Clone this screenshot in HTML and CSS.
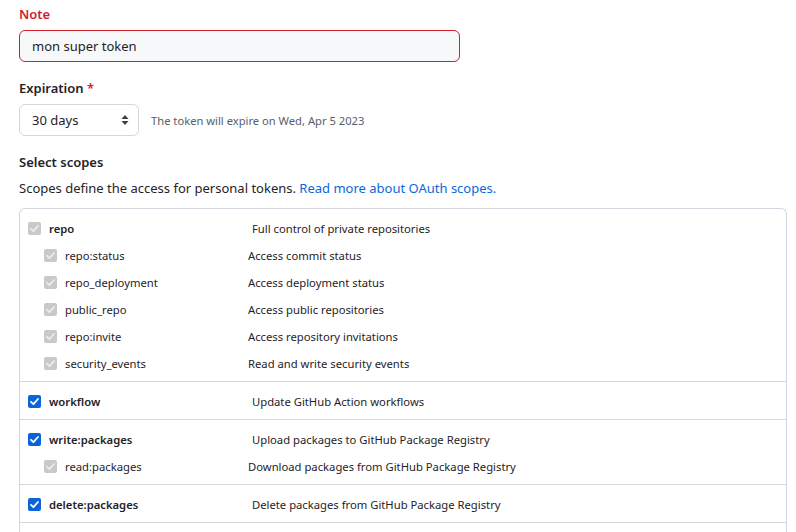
FILE: index.html
```html
<!DOCTYPE html>
<html lang="fr">
<head>
<meta charset="utf-8">
<title>New token</title>
<link rel="stylesheet" href="styles.css">
</head>
<body>
<main class="form">
  <label class="field-label field-label--error" for="note">Note</label>
  <input id="note" class="text-input text-input--error" type="text" value="mon super token">

  <div class="field-label field-label--spaced">Expiration <span class="required">*</span></div>
  <div class="expiration-row">
    <div class="select">
      <span>30 days</span>
      <svg class="select-arrows" width="8" height="12" viewBox="0 0 8 12"><path d="M4 1 L7.5 5 H0.5 Z M4 11 L0.5 7 H7.5 Z" fill="#3b4148"/></svg>
    </div>
    <span class="expire-note">The token will expire on Wed, Apr 5 2023</span>
  </div>

  <div class="field-label field-label--spaced">Select scopes</div>
  <p class="scopes-intro">Scopes define the access for personal tokens. <a href="#">Read more about OAuth scopes.</a></p>

  <div class="scopes">
    <div class="scope-group">
      <div class="scope-row scope-row--parent">
        <span class="scope-name"><span class="cb cb--disabled"><svg viewBox="0 0 13 13"><path d="M3 6.8 L5.4 9.2 L10 4" /></svg></span><strong>repo</strong></span>
        <span class="scope-desc">Full control of private repositories</span>
      </div>
      <div class="scope-row scope-row--child">
        <span class="scope-name"><span class="cb cb--disabled"><svg viewBox="0 0 13 13"><path d="M3 6.8 L5.4 9.2 L10 4" /></svg></span>repo:status</span>
        <span class="scope-desc">Access commit status</span>
      </div>
      <div class="scope-row scope-row--child">
        <span class="scope-name"><span class="cb cb--disabled"><svg viewBox="0 0 13 13"><path d="M3 6.8 L5.4 9.2 L10 4" /></svg></span>repo_deployment</span>
        <span class="scope-desc">Access deployment status</span>
      </div>
      <div class="scope-row scope-row--child">
        <span class="scope-name"><span class="cb cb--disabled"><svg viewBox="0 0 13 13"><path d="M3 6.8 L5.4 9.2 L10 4" /></svg></span>public_repo</span>
        <span class="scope-desc">Access public repositories</span>
      </div>
      <div class="scope-row scope-row--child">
        <span class="scope-name"><span class="cb cb--disabled"><svg viewBox="0 0 13 13"><path d="M3 6.8 L5.4 9.2 L10 4" /></svg></span>repo:invite</span>
        <span class="scope-desc">Access repository invitations</span>
      </div>
      <div class="scope-row scope-row--child">
        <span class="scope-name"><span class="cb cb--disabled"><svg viewBox="0 0 13 13"><path d="M3 6.8 L5.4 9.2 L10 4" /></svg></span>security_events</span>
        <span class="scope-desc">Read and write security events</span>
      </div>
    </div>

    <div class="scope-group">
      <div class="scope-row scope-row--parent">
        <span class="scope-name"><span class="cb cb--checked"><svg viewBox="0 0 13 13"><path d="M3 6.8 L5.4 9.2 L10 4" /></svg></span><strong>workflow</strong></span>
        <span class="scope-desc">Update GitHub Action workflows</span>
      </div>
    </div>

    <div class="scope-group">
      <div class="scope-row scope-row--parent">
        <span class="scope-name"><span class="cb cb--checked"><svg viewBox="0 0 13 13"><path d="M3 6.8 L5.4 9.2 L10 4" /></svg></span><strong>write:packages</strong></span>
        <span class="scope-desc">Upload packages to GitHub Package Registry</span>
      </div>
      <div class="scope-row scope-row--child">
        <span class="scope-name"><span class="cb cb--disabled"><svg viewBox="0 0 13 13"><path d="M3 6.8 L5.4 9.2 L10 4" /></svg></span>read:packages</span>
        <span class="scope-desc">Download packages from GitHub Package Registry</span>
      </div>
    </div>

    <div class="scope-group">
      <div class="scope-row scope-row--parent">
        <span class="scope-name"><span class="cb cb--checked"><svg viewBox="0 0 13 13"><path d="M3 6.8 L5.4 9.2 L10 4" /></svg></span><strong>delete:packages</strong></span>
        <span class="scope-desc">Delete packages from GitHub Package Registry</span>
      </div>
    </div>

    <div class="scope-group scope-group--more"></div>
  </div>
</main>
</body>
</html>
```

FILE: styles.css
```css
html, body {
  margin: 0;
  padding: 0;
  background: #ffffff;
}

body {
  font-family: "Noto Sans", "Open Sans", sans-serif;
  color: #1f2328;
  font-size: 13px;
  overflow: hidden;
  height: 532px;
}

.form {
  padding: 4px 0 0 19px;
  width: 768px;
}

.field-label {
  display: block;
  font-size: 13px;
  font-weight: 600;
  line-height: 21px;
  margin-bottom: 5px;
}

.field-label--error {
  color: #cf222e;
}

.field-label--spaced {
  margin-top: 16px;
}

.required {
  color: #cf222e;
}

.text-input {
  display: block;
  box-sizing: border-box;
  width: 441px;
  height: 32px;
  margin: 0;
  padding: 0 12px;
  font-family: inherit;
  font-size: 13px;
  color: #1f2328;
  background: #f6f8fa;
  border: 1px solid #d0d7de;
  border-radius: 6px;
  outline: none;
}

.text-input--error {
  border-color: #cf222e;
}

.expiration-row {
  display: flex;
  align-items: center;
  gap: 12px;
}

.select {
  box-sizing: border-box;
  width: 120px;
  height: 32px;
  display: flex;
  align-items: center;
  justify-content: space-between;
  padding: 0 9px 0 12px;
  border: 1px solid #d0d7de;
  border-radius: 6px;
  background: #ffffff;
  font-size: 13px;
}

.select-arrows {
  display: block;
}

.expire-note {
  font-size: 11.2px;
  color: #57606a;
}

.scopes-intro {
  margin: 5px 0 9px;
  line-height: 21px;
}

.scopes-intro a {
  color: #0969da;
  text-decoration: none;
}

.scopes {
  border: 1px solid #d0d7de;
  border-bottom: none;
  border-radius: 6px 6px 0 0;
}

.scope-group {
  padding: 6px 0 4px;
  border-top: 1px solid #d0d7de;
}

.scope-group:first-child {
  border-top: none;
}

.scope-group--more {
  height: 20px;
}

.scope-row {
  display: flex;
  align-items: center;
  height: 27px;
  font-size: 11.25px;
}

.scope-name {
  display: flex;
  align-items: center;
  gap: 8px;
}

.scope-name strong {
  font-weight: 600;
}

.scope-row--parent .scope-name {
  width: 224px;
  padding-left: 8px;
}

.scope-row--child .scope-name {
  width: 204px;
  padding-left: 24px;
}

.cb {
  box-sizing: border-box;
  width: 13px;
  height: 13px;
  border-radius: 2px;
  flex: none;
  display: flex;
}

.cb svg {
  width: 13px;
  height: 13px;
}

.cb path {
  fill: none;
  stroke-width: 1.8;
  stroke-linecap: round;
  stroke-linejoin: round;
}

.cb--disabled {
  background: #c9c9c9;
}

.cb--disabled path {
  stroke: #ececec;
}

.cb--checked {
  background: #0a63d9;
}

.cb--checked path {
  stroke: #ffffff;
}

.scope-desc {
  color: #1f2328;
}
```
